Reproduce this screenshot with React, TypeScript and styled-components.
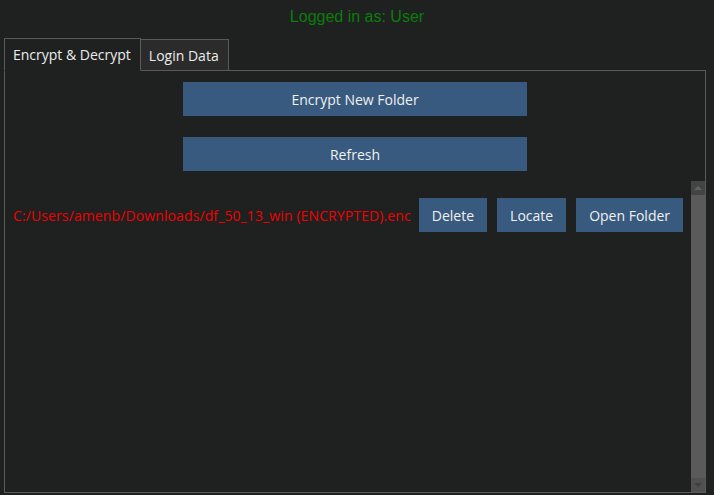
import React, { FC } from 'react';
import styled, { createGlobalStyle } from 'styled-components';

const GlobalStyle = createGlobalStyle`
  html, body {
    margin: 0;
    padding: 0;
    background: #1f2121;
  }
  body {
    font-family: 'Open Sans', 'Noto Sans', sans-serif;
    font-size: 14px;
    color: #ececec;
  }
`;

const StWindow = styled.div`
  width: 714px;
  height: 495px;
  display: flex;
  flex-direction: column;
  box-sizing: border-box;
  padding: 0 8px 2px 4px;
`;

const StHeader = styled.div`
  height: 39px;
  display: flex;
  justify-content: center;
  padding-top: 8px;
  box-sizing: border-box;
  padding-left: 4px;
  font-family: 'Liberation Sans', Arial, sans-serif;
  font-size: 16px;
  color: #0c7c0c;
`;

const StTabBar = styled.div`
  display: flex;
  align-items: flex-end;
  height: 32px;
  margin-bottom: -1px;
  position: relative;
  z-index: 1;
`;

const StTab = styled.div<{ $active?: boolean }>`
  height: ${({ $active }) => ($active ? '33px' : '32px')};
  box-sizing: border-box;
  padding: 0 9px 0 8px;
  display: flex;
  align-items: center;
  padding-bottom: ${({ $active }) => ($active ? '1px' : '0')};
  border: 1px solid #5a5a5a;
  border-bottom: ${({ $active }) => ($active ? '1px solid #1f2121' : '1px solid #5a5a5a')};
  border-left-width: ${({ $active }) => ($active ? '1px' : '0')};
  background: ${({ $active }) => ($active ? '#1f2121' : '#2b2b2b')};
  color: #ececec;
  white-space: nowrap;
`;

const StPane = styled.div`
  flex: 1 1 auto;
  border: 1px solid #5a5a5a;
  display: flex;
  flex-direction: column;
  min-height: 0;
`;

const StActions = styled.div`
  display: flex;
  flex-direction: column;
  align-items: center;
  gap: 21px;
  padding-top: 11px;
`;

const StButton = styled.button<{ $wide?: boolean }>`
  font-family: 'Open Sans', 'Noto Sans', sans-serif;
  font-size: 14px;
  color: #f0f0f0;
  background: #385a7e;
  border: none;
  height: 34px;
  padding: 0 13px;
  width: ${({ $wide }) => ($wide ? '344px' : 'auto')};
  flex-shrink: 0;
  cursor: pointer;
`;

const StScrollArea = styled.div`
  flex: 1 1 auto;
  display: flex;
  margin-top: 10px;
  min-height: 0;
`;

const StList = styled.div`
  flex: 1 1 auto;
  padding: 17px 8px 0 8px;
`;

const StRow = styled.div`
  display: flex;
  align-items: center;
  gap: 10px;
`;

const StPath = styled.span`
  color: #f00000;
  white-space: nowrap;
  letter-spacing: 0.11px;
  margin-right: -2px;
`;

const StScrollbar = styled.div`
  width: 14px;
  display: flex;
  flex-direction: column;
  background: #5a5a5a;
`;

const StArrow = styled.div<{ $down?: boolean }>`
  height: 14px;
  flex-shrink: 0;
  display: flex;
  align-items: center;
  justify-content: center;
  background: ${({ $down }) => ($down ? '#505050' : '#444444')};
  &::after {
    content: '';
    width: 0;
    height: 0;
    border-left: 4px solid transparent;
    border-right: 4px solid transparent;
    ${({ $down }) =>
      $down ? 'border-top: 4px solid #3e3e3e;' : 'border-bottom: 4px solid #626262;'}
  }
`;

const StThumb = styled.div`
  flex: 1 1 auto;
  background: #5a5a5a;
`;

interface IFileRowProps {
  path: string;
}

const FileRow: FC<IFileRowProps> = ({ path }) => (
  <StRow>
    <StPath>{path}</StPath>
    <StButton>Delete</StButton>
    <StButton>Locate</StButton>
    <StButton>Open Folder</StButton>
  </StRow>
);

const App: FC = () => {
  return (
    <>
      <GlobalStyle />
      <StWindow>
        <StHeader>Logged in as: User</StHeader>
        <StTabBar>
          <StTab $active>Encrypt &amp; Decrypt</StTab>
          <StTab>Login Data</StTab>
        </StTabBar>
        <StPane>
          <StActions>
            <StButton $wide>Encrypt New Folder</StButton>
            <StButton $wide>Refresh</StButton>
          </StActions>
          <StScrollArea>
            <StList>
              <FileRow path="C:/Users/amenb/Downloads/df_50_13_win (ENCRYPTED).enc" />
            </StList>
            <StScrollbar>
              <StArrow />
              <StThumb />
              <StArrow $down />
            </StScrollbar>
          </StScrollArea>
        </StPane>
      </StWindow>
    </>
  );
};

export default App;
